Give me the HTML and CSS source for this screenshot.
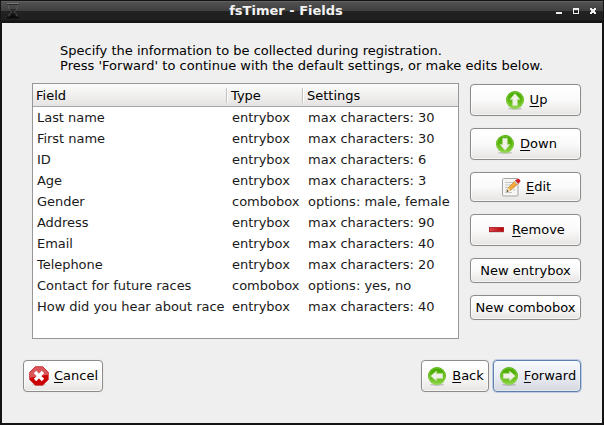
FILE: index.html
```html
<!DOCTYPE html>
<html lang="en">
<head>
<meta charset="utf-8">
<title>fsTimer - Fields</title>
<link rel="stylesheet" href="styles.css">
</head>
<body>
<svg width="0" height="0" class="defs" aria-hidden="true">
  <defs>
    <linearGradient id="green" x1="0" y1="0" x2="0" y2="1">
      <stop offset="0" stop-color="#45a800"/><stop offset=".5" stop-color="#5cb50e"/><stop offset="1" stop-color="#8ed648"/>
    </linearGradient>
    <linearGradient id="pencil" x1="0" y1="0" x2="1" y2="1">
      <stop offset="0" stop-color="#ffc65c"/><stop offset="1" stop-color="#e58a1c"/>
    </linearGradient>
    <linearGradient id="bar" x1="0" y1="0" x2="1" y2="0">
      <stop offset="0" stop-color="#d9484c"/><stop offset="1" stop-color="#b00509"/>
    </linearGradient>
    <g id="disc">
      <ellipse cx="10" cy="18.7" rx="7" ry="1.2" fill="#000" opacity=".18"/>
      <circle cx="10" cy="10" r="9" fill="url(#green)"/>
      <circle cx="10" cy="10" r="8" fill="none" stroke="#9bdc5b" stroke-width=".7" opacity=".7"/>
    </g>
    <path id="arrow" d="M10 3.6 15 9.6H12.4V15.8H7.6V9.6H5Z" fill="#f1f1ea" stroke="#b9e092" stroke-width=".6"/>
  </defs>
</svg>
<div class="window">
  <header class="titlebar">
    <svg class="app-icon" width="14" height="17" viewBox="0 0 14 17"><path d="M2.500 2V4Q2.500 6.500 6 8.500 2.500 10.500 2.500 14M11.500 2V4Q11.500 6.500 8 8.500 11.500 10.500 11.500 14" fill="none" stroke="#707070" stroke-width="1" opacity=".55"/><path d="M1 .500H13" stroke="#777"/><path d="M1 1.500H13" stroke="#2a2a2a"/><path d="M3.500 6H10.500L7.500 9H6.500Z" fill="#2b2b2b"/><path d="M3 14 7 11 11 14Z" fill="#0d0d0d"/><path d="M1 14.500H13" stroke="#0c0c0c" stroke-width="2"/></svg>
    <h1>fsTimer - Fields</h1>
    <svg class="controls" width="42" height="8" viewBox="0 0 42 8"><path d="M1 5H7V7H1Z" fill="#eee"/><path d="M18 1H24V7H18Z M19 3V6H23V3Z" fill="#eee" fill-rule="evenodd"/><path d="M35 1H37V2H39V1H41V3H40V5H41V7H39V6H37V7H35V5H36V3H35Z" fill="#eee"/></svg>
  </header>
  <main>
    <p class="intro">Specify the information to be collected during registration.<br><span class="second">Press 'Forward' to continue with the default settings, or make edits below.</span></p>
    <div class="content">
      <div class="list">
        <div class="head"><span>Field</span><span>Type</span><span>Settings</span></div>
        <div class="row"><span>Last name</span><span>entrybox</span><span>max characters: 30</span></div>
        <div class="row"><span>First name</span><span>entrybox</span><span>max characters: 30</span></div>
        <div class="row"><span>ID</span><span>entrybox</span><span>max characters: 6</span></div>
        <div class="row"><span>Age</span><span>entrybox</span><span>max characters: 3</span></div>
        <div class="row"><span>Gender</span><span>combobox</span><span>options: male, female</span></div>
        <div class="row"><span>Address</span><span>entrybox</span><span>max characters: 90</span></div>
        <div class="row"><span>Email</span><span>entrybox</span><span>max characters: 40</span></div>
        <div class="row"><span>Telephone</span><span>entrybox</span><span>max characters: 20</span></div>
        <div class="row"><span>Contact for future races</span><span>combobox</span><span>options: yes, no</span></div>
        <div class="row"><span>How did you hear about race</span><span>entrybox</span><span>max characters: 40</span></div>
      </div>
      <div class="side">
        <button><svg width="20" height="20"><use href="#disc"/><use href="#arrow"/></svg><span><u>U</u>p</span></button>
        <button><svg width="20" height="20"><use href="#disc"/><use href="#arrow" transform="rotate(180 10 10)"/></svg><span><u>D</u>own</span></button>
        <button class="edit"><svg width="20" height="20"><rect x="1.5" y="1.5" width="15.5" height="17.5" rx="1" fill="#f6f6f4" stroke="#a5a5a2"/><path d="M4 5.5H12M4 8H10M4 10.5H8M4 13H6M12 13H14.500M4 15.500H11" stroke="#c4c4c0"/><path d="M6 14.500 7.500 10.500 15 3 18 6 10 13Z" fill="url(#pencil)" stroke="#b87420" stroke-width=".6"/><path d="M14 4 16 2Q18 1 19 3 20 4 19 5L17 7Z" fill="#d32029"/><path d="M13.300 4.700 14.300 3.700 17.300 6.700 16.300 7.700Z" fill="#c9cdd0"/><path d="M5.500 15 7.300 10.800 9.800 13Z" fill="#f2d9a8"/><path d="M5.500 15 6.300 13 7.400 14.200Z" fill="#222"/></svg><span><u>E</u>dit</span></button>
        <button><svg width="20" height="20"><rect x="2.500" y="7.500" width="14" height="4" fill="url(#bar)" stroke="#b5292d"/><path d="M2 12.500H17" stroke="#000" opacity=".12"/></svg><span><u>R</u>emove</span></button>
        <button class="plain">New entrybox</button>
        <button class="plain">New combobox</button>
      </div>
    </div>
    <footer>
      <button class="cancel"><svg width="20" height="20"><ellipse cx="10" cy="18.800" rx="7" ry="1" opacity=".15"/><path d="M6.300.7H13.700L19.300 6.300V13.700L13.700 19.300H6.300L.7 13.700V6.300Z" fill="#cc0000"/><path d="M6.300.7H13.700L19.300 6.300V9Q10 9 .7 12V6.300Z" fill="#d9575a"/><path d="M6.300.7H13.700L19.300 6.300V13.700L13.700 19.300H6.300L.7 13.700V6.300Z" fill="none" stroke="#c52024" stroke-width=".7"/><path d="M6 6 14 14M14 6 6 14" stroke="#fff" stroke-width="3.300"/></svg><span><u>C</u>ancel</span></button>
      <button class="back"><svg width="20" height="20"><use href="#disc"/><use href="#arrow" transform="rotate(-90 10 10)"/></svg><span><u>B</u>ack</span></button>
      <button class="forward"><svg width="20" height="20"><use href="#disc"/><use href="#arrow" transform="rotate(90 10 10)"/></svg><span><u>F</u>orward</span></button>
    </footer>
  </main>
</div>
</body>
</html>
```
FILE: styles.css
```css
* { box-sizing: border-box; }
body { margin: 0; font: 13px/15px "DejaVu Sans", sans-serif; color: #000; overflow: hidden; }
.defs { position: absolute; }
.window { width: 604px; height: 425px; background: #141414; padding: 0 2px 2px; }
.titlebar {
  height: 23px; display: flex; align-items: flex-start; justify-content: space-between;
  margin: 0 -1px; padding: 0 6px 0 5px;
  background: linear-gradient(#151515 0 1px, #606060 1px 2px, #515151 2px, #3f3f3f 11px, #222 11px, #1f1f1f 20px, #151515 21px);
}
.titlebar h1 { margin: 3px 3px 0 0; font-size: 13px; line-height: 15px; color: #f2f2f2; }
.app-icon { margin-top: 3px; }
.controls { margin-top: 7px; }
main { height: 400px; background: #efefef; padding: 20px 21px 0; }
.intro { margin: 0 0 10px 37px; white-space: nowrap; }
.second { letter-spacing: .022px; }
.content { display: flex; gap: 11px; margin-left: 9px; }
.list { width: 427px; height: 256px; border: 1px solid #979797; background: #fff; color: #1a1a1a; }
.head, .row { display: grid; grid-template-columns: 195px 76px 1fr; line-height: 21px; white-space: nowrap; }
.row { letter-spacing: -.04px; }
.head { height: 23px; line-height: 23px; border-bottom: 1px solid #a8a6a4; background: linear-gradient(#fbfbfb, #e5e4e2); color: #000; }
.head span { padding-left: 3px; }
.head span + span { background: linear-gradient(#c2c1bf, #c2c1bf) 0 4px / 1px 15px no-repeat, linear-gradient(#fff, #fff) 1px 4px / 1px 15px no-repeat; margin-left: -2px; padding-left: 5px; }
.row span { padding-left: 4px; }
.row span + span { letter-spacing: 0; }
.side { width: 111px; display: flex; flex-direction: column; gap: 12px; padding-top: 1px; }
button {
  height: 32px; padding: 0; display: flex; align-items: center; justify-content: center; gap: 4px;
  border: 1px solid #8e8c8b; border-radius: 4px; font: inherit; color: #000; white-space: nowrap;
  background: linear-gradient(#fff, #fafafa 50%, #e7e5e3); box-shadow: inset 0 0 0 1px rgba(255,255,255,.6), 0 0 1px #c8c8c8;
}
button svg { display: block; flex: none; }
button span { margin: 0 -1px 2px 1px; }
u { text-underline-offset: 2px; text-decoration-thickness: 1px; text-decoration-skip-ink: none; }
.edit { height: 30px; }
.plain { height: 25px; }
footer { display: flex; margin-top: 21px; }
.cancel { width: 80px; }
.back { width: 68px; margin-left: auto; }
.forward { width: 88px; margin-left: 4px; border-color: #5d7fab; background: linear-gradient(#f6f9fd, #e9edf3 50%, #d5d8de); box-shadow: inset 0 0 0 1px rgba(255,255,255,.4), 0 0 0 1px #bfcde4; }
```
